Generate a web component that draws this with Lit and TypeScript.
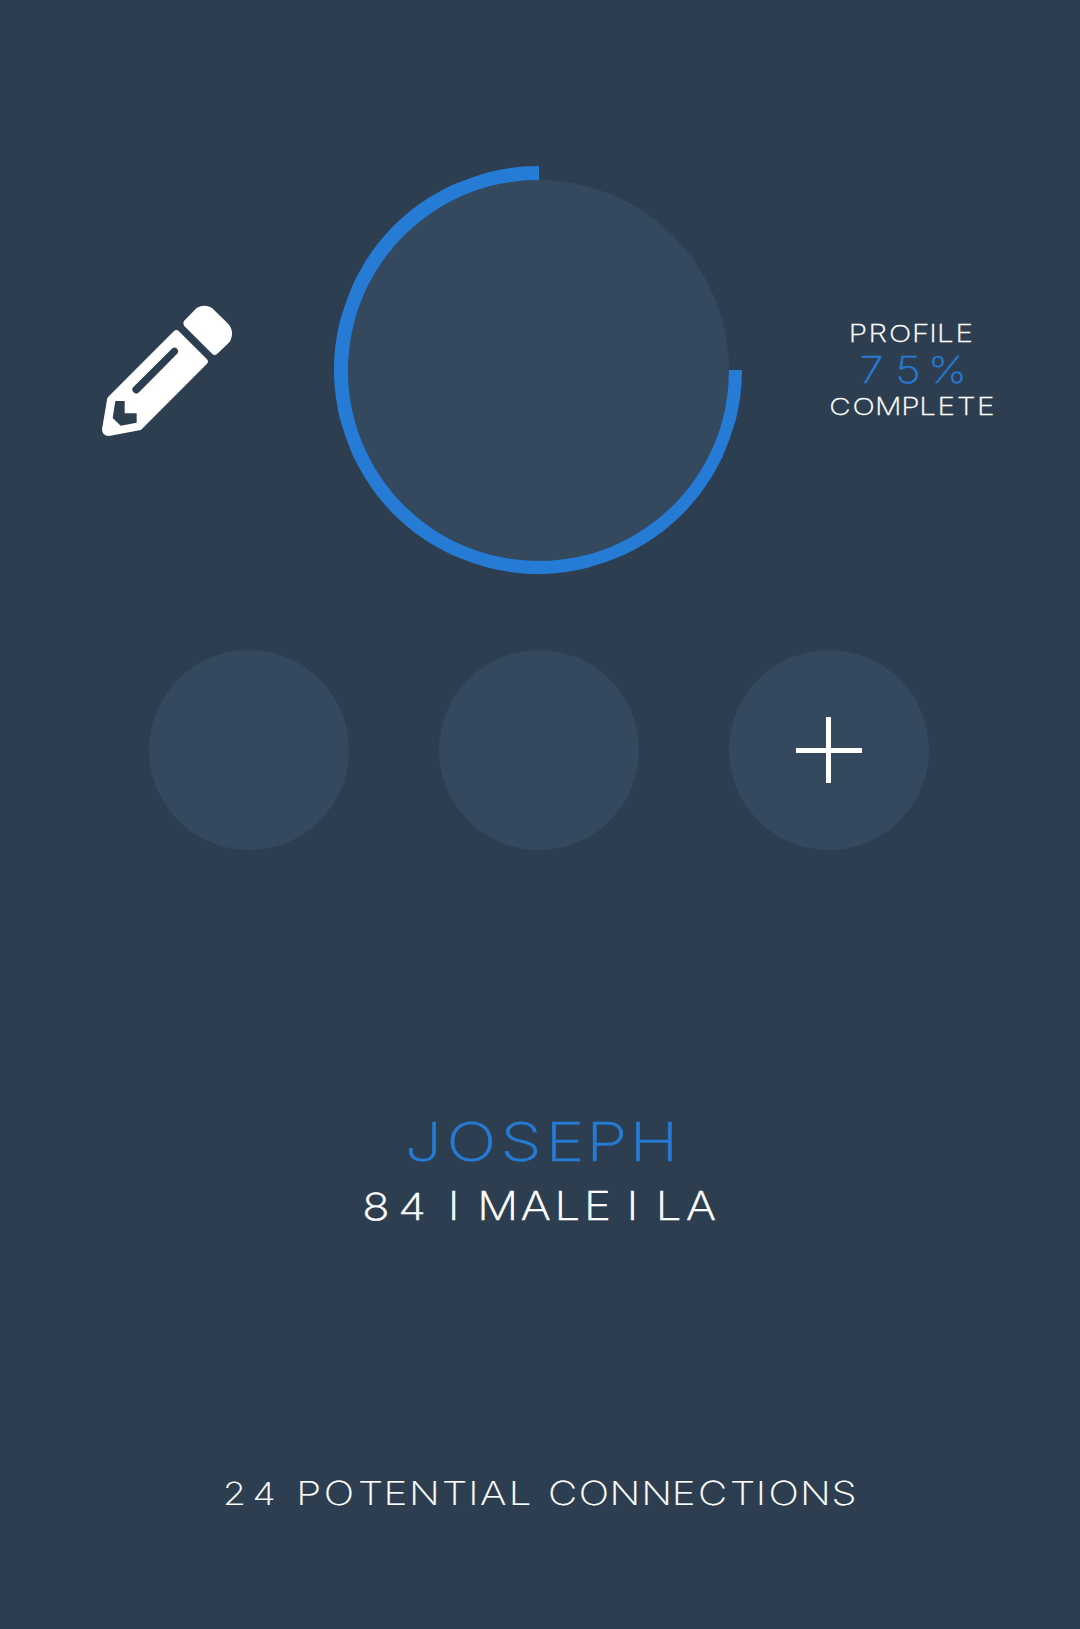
import { LitElement, html, svg, css } from "lit";
import { customElement, property } from "lit/decorators.js";

interface Run {
  text: string;
  /** Horizontal centre of each character, in view box units (3 per pixel). */
  at: number[];
  baseline: number;
  size: number;
  tone: string;
  stretch: number;
}

@customElement("spaced-text")
class SpacedText extends LitElement {
  @property({ attribute: false }) runs: Run[] = [];
  @property({ type: Number }) w = 100;
  @property({ type: Number }) h = 50;

  static styles = css`
    :host { display: block; flex: none; }
    svg { display: block; }
    text {
      font-family: Inter, "Liberation Sans", sans-serif; font-weight: 200;
      text-anchor: middle; white-space: pre;
    }
    .small { fill: #fff; stroke: #fff; stroke-width: 0.9; }
    .white { fill: #fff; stroke: #fff; stroke-width: 1.8; }
    .light { fill: #fff; stroke: #fff; stroke-width: 0.5; }
    .percent { fill: #267bd5; stroke: #267bd5; stroke-width: 1; }
    .name { fill: #267bd5; stroke: #267bd5; stroke-width: 1.6; }
  `;

  render() {
    return html`<svg width=${this.w} height=${this.h} viewBox="0 0 ${this.w * 3} ${this.h * 3}">
      ${this.runs.map(
        (r) => svg`<text class=${r.tone} font-size=${r.size} y=${r.baseline}
          transform="scale(${r.stretch} 1)"
          x=${r.at.map((x) => (x / r.stretch).toFixed(1)).join(" ")}>${r.text}</text>`
      )}
    </svg>`;
  }
}

const PROGRESS: Run[] = [
  { text: "PROFILE", at: [114, 173, 240.5, 302, 339, 376, 433], baseline: 95.5, size: 71, tone: "small", stretch: 1.25 },
  { text: "75%", at: [155, 264, 382], baseline: 218, size: 109, tone: "percent", stretch: 1.2 },
  { text: "COMPLETE", at: [60, 131, 205, 271, 323, 379, 439, 497], baseline: 314.5, size: 71, tone: "small", stretch: 1.25 },
];

const PERSON: Run[] = [
  { text: "JOSEPH", at: [220, 364, 513, 645, 770, 912], baseline: 167.5, size: 160, tone: "name", stretch: 1.24 },
  { text: "84", at: [78, 186], baseline: 344.5, size: 111, tone: "white", stretch: 1.22 },
  { text: "I", at: [311], baseline: 344.5, size: 118, tone: "white", stretch: 1.17 },
  { text: "MALE", at: [443, 557, 652, 742], baseline: 344.5, size: 118, tone: "white", stretch: 1.16 },
  { text: "I", at: [847], baseline: 344.5, size: 118, tone: "white", stretch: 1.17 },
  { text: "LA", at: [956, 1053], baseline: 344.5, size: 118, tone: "white", stretch: 1.16 },
];

const CONNECTIONS: Run[] = [
  { text: "24", at: [58, 147], baseline: 119, size: 95, tone: "light", stretch: 1.19 },
  { text: "POTENTIAL", at: [281, 372, 467, 541, 628, 719, 775, 835, 915], baseline: 119, size: 99, tone: "light", stretch: 1.22 },
  {
    text: "CONNECTIONS",
    at: [1043, 1137, 1230, 1325, 1406, 1493, 1583, 1638, 1706, 1801, 1887],
    baseline: 119, size: 99, tone: "light", stretch: 1.22,
  },
];

/** Vertices, in degrees within a quadrant, of the faceted outer rim. */
const FACETS = [14.4, 25.1, 32, 37.6, 43.3, 46.7, 52.4, 58, 64.9, 75.6];

function ringPath(): string {
  const R = 204;
  let d = "M408 204";
  for (const start of [0, 90, 180]) {
    FACETS.forEach((deg, i) => {
      const a = ((start + deg) * Math.PI) / 180;
      const p = `${(R + R * Math.cos(a)).toFixed(2)} ${(R + R * Math.sin(a)).toFixed(2)}`;
      const bend = i === 0 ? R : 340;
      d += `A${bend} ${bend} 0 0 1 ${p}`;
    });
  }
  return d + `A${R} ${R} 0 0 1 204 0H205V14A190.5 190.5 0 1 0 395 204Z`;
}

@customElement("app-root")
class AppRoot extends LitElement {
  static styles = css`
    :host { display: block; }
    .page {
      box-sizing: border-box; width: 1080px; height: 1629px; padding-top: 166px;
      background: #2d3e50; overflow: hidden; display: flex; flex-direction: column;
    }
    svg { display: block; flex: none; }
    .profile { display: flex; align-items: center; height: 408px; padding-left: 90px; }
    .dial { margin: 0 78px 0 89px; }
    .photos { display: flex; gap: 90px; padding: 76px 0 0 149px; }
    .photo { width: 200px; height: 200px; border-radius: 50%; background: #34495e; }
    .person { padding: 255px 0 0 350px; }
    .connections { padding: 230px 0 0 215px; }
  `;

  render() {
    return html`<main class="page">
      <section class="profile">
        <svg width="155" height="150" viewBox="0 0 465 450">
          <path fill="#fff" d="M320 39Q343 26 366 39L416 88Q433 110 422 135Q420 140 415 145L381 177Q374 183 367 177L282 92Q277 86 282 78Z" />
          <path fill="#fff" fill-rule="evenodd" d="M252 108Q259 102 266 108L351 193Q357 200 351 206L155 403Q152 406 148 406L57 423Q36 423 36 403L51 314Q51 309 55 305ZM248 159L131 275A11.5 11.5 0 0 0 147 292L263 175A11.5 11.5 0 0 0 248 159ZM76 318L68 369L92 392L140 383V355H104V318Z" />
        </svg>
        <svg class="dial" width="408" height="408" viewBox="0 0 408 408">
          <circle cx="204.5" cy="204.5" r="190.5" fill="#34495e" />
          <path fill="#267bd5" d=${ringPath()} />
        </svg>
        <spaced-text .w=${185} .h=${120} .runs=${PROGRESS}></spaced-text>
      </section>
      <section class="photos">
        <div class="photo"></div>
        <div class="photo"></div>
        <div class="photo">
          <svg width="200" height="200" viewBox="0 0 200 200">
            <path fill="#fff" d="M97 67h5v31h31v5h-31v30h-5v-30H67v-5h30z" />
          </svg>
        </div>
      </section>
      <spaced-text class="person" .w=${380} .h=${130} .runs=${PERSON}></spaced-text>
      <spaced-text class="connections" .w=${660} .h=${55} .runs=${CONNECTIONS}></spaced-text>
    </main>`;
  }
}
